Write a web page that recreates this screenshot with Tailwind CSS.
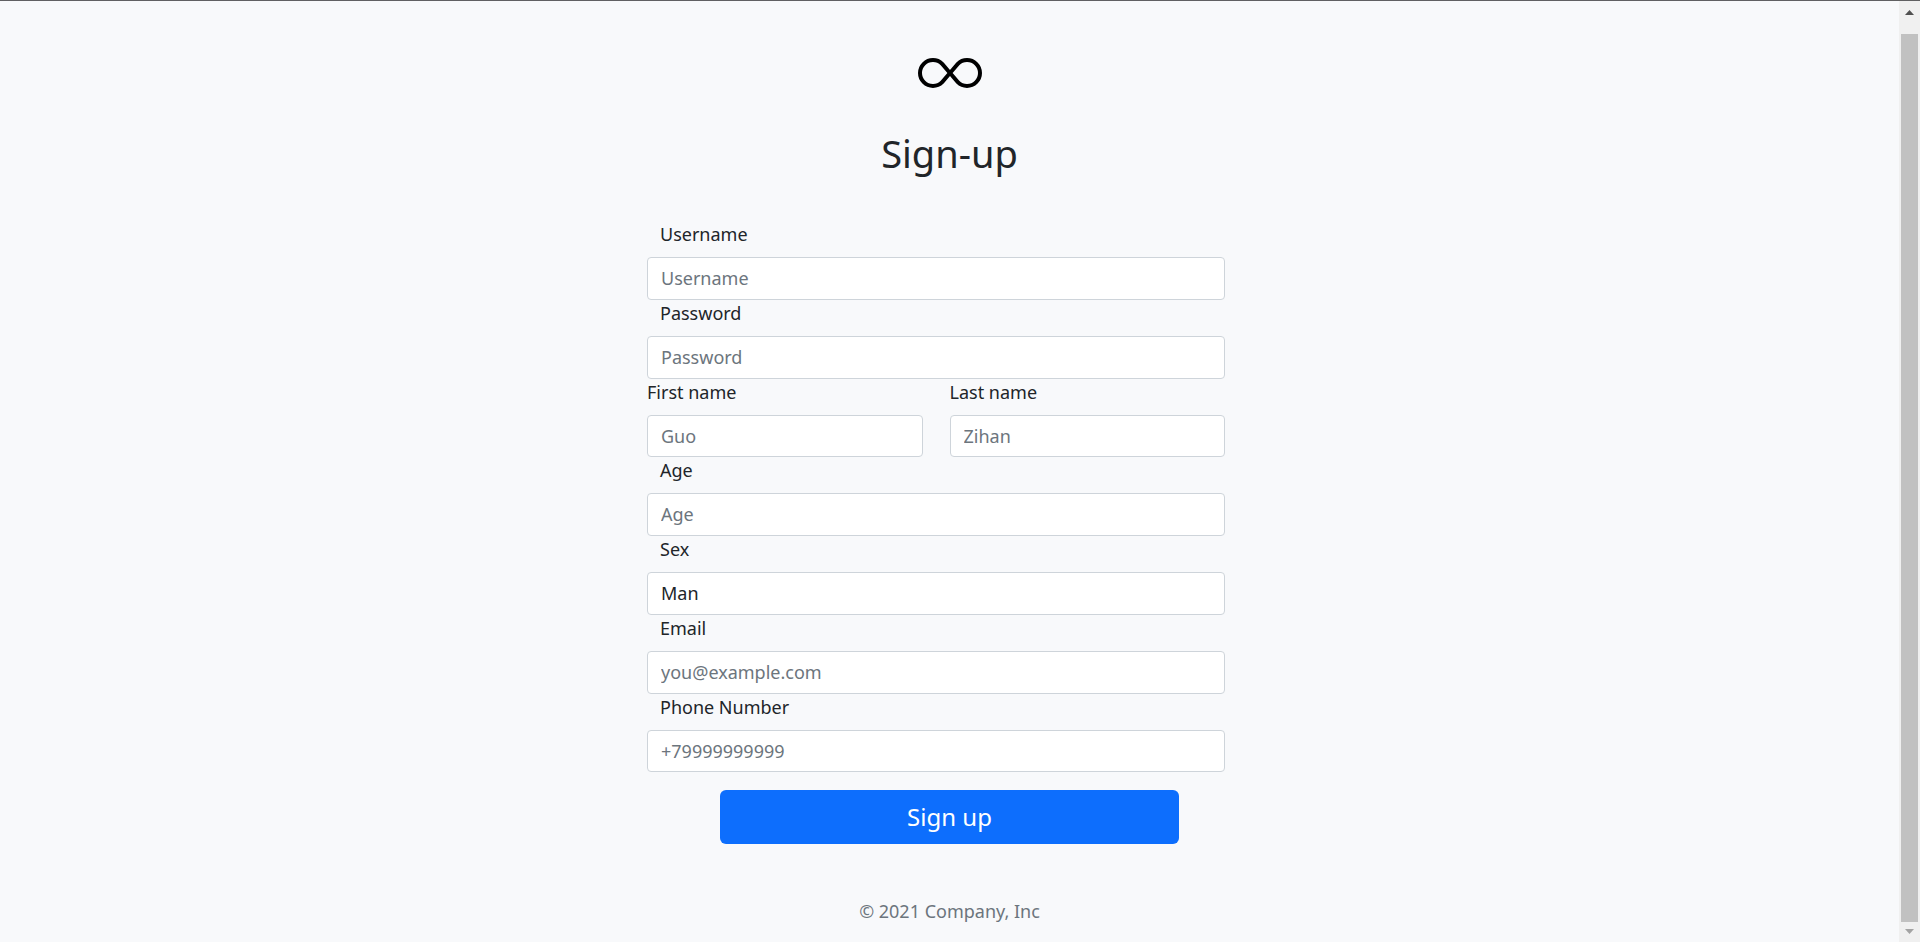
<!DOCTYPE html>
<html lang="en">
<head>
<meta charset="utf-8">
<meta name="viewport" content="width=device-width, initial-scale=1">
<title>Sign-up</title>
<script src="https://cdn.jsdelivr.net/npm/@tailwindcss/browser@4"></script>
</head>
<body class="flex min-h-screen border-t border-[#606062] bg-[#f8f9fb] font-['Noto_Sans','Open_Sans',sans-serif] text-[18px] leading-[27px] text-[#212529]">
  <div class="flex flex-1 flex-col items-center px-4 pt-[41px]">
    <main class="w-full max-w-[605px]">
      <svg class="mx-auto size-16 text-black" viewBox="0 0 16 16" fill="currentColor" aria-hidden="true">
        <path d="M5.68 5.792 7.345 7.75 5.681 9.708a2.75 2.75 0 1 1 0-3.916ZM8 6.978 6.416 5.113l-.014-.015a3.75 3.75 0 1 0 0 5.304l.014-.015L8 8.522l1.584 1.865.014.015a3.75 3.75 0 1 0 0-5.304l-.014.015L8 6.978Zm.656.772 1.663-1.958a2.75 2.75 0 1 1 0 3.916L8.656 7.75Z"/>
      </svg>
      <h1 class="mt-[23px] text-center text-[38px] leading-[48px]">Sign-up</h1>
      <form class="mt-11">
        <div class="pr-[27px]">
          <div>
            <label for="username" class="block pl-[13px]">Username</label>
            <input id="username" type="text" placeholder="Username" class="mt-[9px] block h-[43px] w-full rounded border border-[#ced4da] bg-white px-[13px] pb-[2px] placeholder:text-[#6c757d]">
          </div>
          <div>
            <label for="password" class="block pl-[13px]">Password</label>
            <input id="password" type="password" placeholder="Password" class="mt-[9px] block h-[43px] w-full rounded border border-[#ced4da] bg-white px-[13px] pb-[2px] placeholder:text-[#6c757d]">
          </div>
          <div class="grid grid-cols-2 gap-[27px]">
            <div>
              <label for="first" class="block">First name</label>
              <input id="first" type="text" placeholder="Guo" class="mt-[9px] block h-[42px] w-full rounded border border-[#ced4da] bg-white px-[13px] placeholder:text-[#6c757d]">
            </div>
            <div>
              <label for="last" class="block">Last name</label>
              <input id="last" type="text" placeholder="Zihan" class="mt-[9px] block h-[42px] w-full rounded border border-[#ced4da] bg-white px-[13px] placeholder:text-[#6c757d]">
            </div>
          </div>
          <div>
            <label for="age" class="block pl-[13px]">Age</label>
            <input id="age" type="text" placeholder="Age" class="mt-[9px] block h-[43px] w-full rounded border border-[#ced4da] bg-white px-[13px] pb-[2px] placeholder:text-[#6c757d]">
          </div>
          <div>
            <label for="sex" class="block pl-[13px]">Sex</label>
            <select id="sex" class="mt-[9px] block h-[43px] w-full appearance-none rounded border border-[#ced4da] bg-white px-[13px]">
              <option>Man</option>
              <option>Woman</option>
            </select>
          </div>
          <div>
            <label for="email" class="block pl-[13px]">Email</label>
            <input id="email" type="email" placeholder="you@example.com" class="mt-[9px] block h-[43px] w-full rounded border border-[#ced4da] bg-white px-[13px] pb-[2px] placeholder:text-[#6c757d]">
          </div>
          <div>
            <label for="phone" class="block pl-[13px]">Phone Number</label>
            <input id="phone" type="tel" placeholder="+79999999999" class="mt-[9px] block h-[42px] w-full rounded border border-[#ced4da] bg-white px-[13px] placeholder:text-[#6c757d]">
          </div>
        </div>
        <button type="submit" class="mx-auto mt-[18px] block h-[54px] w-full max-w-[459px] rounded-md bg-[#0d6efd] text-[24px] leading-8 text-white">Sign up</button>
      </form>
    </main>
    <footer class="mt-[54px] text-[#6c757d]">© 2021 Company, Inc</footer>
  </div>
  <!-- Page scrollbar -->
  <div class="flex w-[21px] flex-col items-center bg-[#f0f0f0]" aria-hidden="true">
    <svg class="my-[9px] h-[15px] w-[9px]" viewBox="0 0 9 15"><path d="M0 5 4.500 0 9 5Z" fill="#505050"/></svg>
    <div class="w-[17px] flex-1 bg-[#c1c1c1]"></div>
    <svg class="mt-[7px] h-[13px] w-[9px]" viewBox="0 0 9 13"><path d="M0 0H9L4.500 5Z" fill="#a3a3a3"/></svg>
  </div>
</body>
</html>
